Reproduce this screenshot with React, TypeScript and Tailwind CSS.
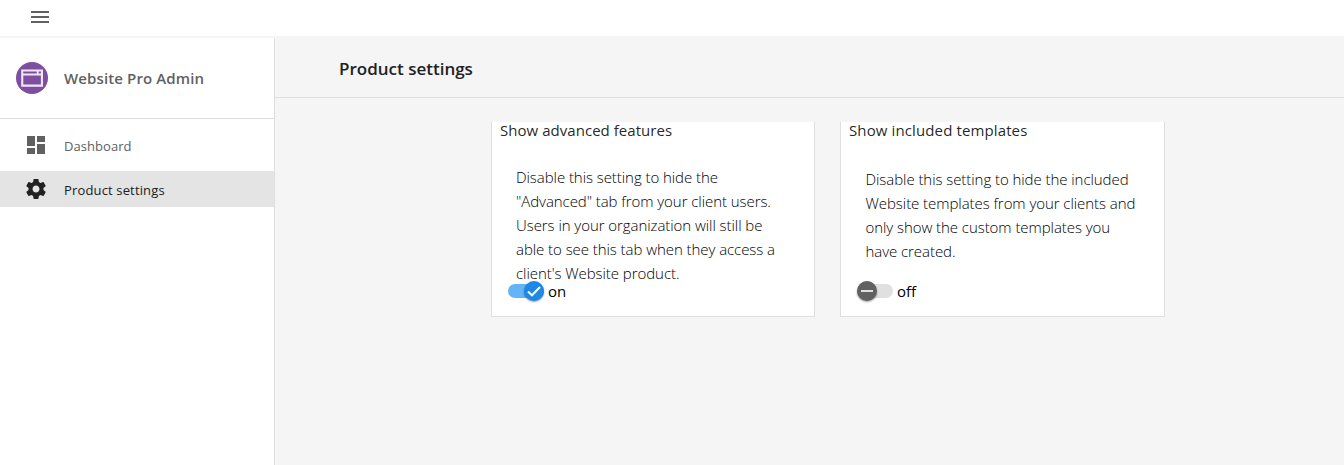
import { ReactNode } from 'react';

function Line({ className = '', children }: { className?: string; children: ReactNode }) {
  return <span className={`block whitespace-nowrap ${className}`}>{children}</span>;
}

function MenuIcon() {
  return (
    <svg className="size-6" viewBox="0 0 24 24" fill="#616161">
      <path d="M3 18h18v-2H3v2zm0-5h18v-2H3v2zm0-7v2h18V6H3z" />
    </svg>
  );
}

function WindowLogo() {
  return (
    <svg className="size-8 shrink-0" viewBox="0 0 32 32">
      <circle cx="16" cy="16" r="16" fill="#7e4fa0" />
      <path fill="#efe6f5" fillRule="evenodd" d="M5.2 7.5h21.8v17.2H5.2zM7.2 9.6v1.8h13.6V9.6zM22.6 9.6v1.8h2.3V9.6zM7.3 13.6v9h17.6v-9z" />
    </svg>
  );
}

function DashboardIcon() {
  return (
    <svg className="size-6 shrink-0" viewBox="0 0 24 24" fill="#616161">
      <path d="M3 13h8V3H3v10zm0 8h8v-6H3v6zm10 0h8V11h-8v10zm0-18v6h8V3h-8z" />
    </svg>
  );
}

function SettingsIcon() {
  return (
    <svg className="size-6 shrink-0" viewBox="0 0 24 24" fill="#212121">
      <path d="M19.43 12.98c.04-.32.07-.64.07-.98s-.03-.66-.07-.98l2.11-1.65c.19-.15.24-.42.12-.64l-2-3.46c-.12-.22-.39-.3-.61-.22l-2.49 1c-.52-.4-1.08-.73-1.69-.98l-.38-2.65C14.46 2.18 14.25 2 14 2h-4c-.25 0-.46.18-.49.42l-.38 2.65c-.61.25-1.17.59-1.69.98l-2.49-1c-.23-.09-.49 0-.61.22l-2 3.46c-.13.22-.07.49.12.64l2.11 1.65c-.04.32-.07.65-.07.98s.03.66.07.98l-2.11 1.65c-.19.15-.24.42-.12.64l2 3.46c.12.22.39.3.61.22l2.49-1c.52.4 1.08.73 1.69.98l.38 2.65c.03.24.24.42.49.42h4c.25 0 .46-.18.49-.42l.38-2.65c.61-.25 1.17-.59 1.69-.98l2.49 1c.23.09.49 0 .61-.22l2-3.46c.12-.22.07-.49-.12-.64l-2.11-1.65zM12 15.5c-1.93 0-3.5-1.57-3.5-3.5s1.57-3.5 3.5-3.5 3.5 1.57 3.5 3.5-1.57 3.5-3.5 3.5z" />
    </svg>
  );
}

function Toggle({ on }: { on: boolean }) {
  return (
    <span className={`flex h-[14px] w-9 items-center rounded-full ${on ? 'justify-end bg-[#64b5f6]' : 'justify-start bg-[#e0e0e0]'}`}>
      <span className={`flex size-5 shrink-0 items-center justify-center rounded-full shadow-[0_1px_2px_rgba(0,0,0,0.4)] ${on ? 'bg-[#1e88e5]' : 'bg-[#616161]'}`}>
        <svg className="size-4" viewBox="0 0 16 16" fill="none" stroke={on ? '#ffffff' : '#e0e0e0'} strokeWidth="2">
          {on ? <path d="M2 8.5 6 12.3 14 4" /> : <path d="M2 8h12" />}
        </svg>
      </span>
    </span>
  );
}

function Card({ title, on, className, children }: { title: ReactNode; on: boolean; className: string; children: ReactNode }) {
  return (
    <section className={`flex h-[195px] flex-col border-x border-b border-[#dedede] bg-white text-[#212121] ${className}`}>
      <h2 className="h-[43px] pl-2 text-[15px] leading-[16px] tracking-[0.04px] text-black/87">{title}</h2>
      <div className="h-[116px] pl-6 text-[15px] font-light leading-6 tracking-[-0.06px] text-black">{children}</div>
      <div className="flex h-5 items-center gap-1 pl-4 text-[15px] leading-5 text-black">
        <Toggle on={on} />
        <span>{on ? 'on' : 'off'}</span>
      </div>
    </section>
  );
}

export default function App() {
  return (
    <div className="flex h-[465px] w-[1344px] flex-col overflow-hidden bg-[#f5f5f5] font-['Open_Sans','Noto_Sans',sans-serif]">
      <header className="mb-0.5 flex h-9 shrink-0 items-start bg-white pl-7 pt-[5px]">
        <MenuIcon />
      </header>
      <div className="flex flex-1">
        <aside className="w-[275px] border-r border-[#dedede] bg-white">
          <div className="flex h-[81px] items-center gap-4 border-b border-[#dedede] pl-4 text-[15px] font-semibold tracking-[0.12px] text-[#616161]">
            <WindowLogo />
            <span>Website Pro Admin</span>
          </div>
          <nav className="flex flex-col gap-2 pt-2 text-[13px]">
            <a className="flex h-9 items-center gap-4 pl-6 text-[#616161]">
              <DashboardIcon />
              <span className="pt-[3px] tracking-[0.05px]">Dashboard</span>
            </a>
            <a className="flex h-9 items-center gap-4 bg-[#e4e4e4] pl-6 text-[#212121]">
              <SettingsIcon />
              <span className="pt-[3px] tracking-[0.15px]">Product settings</span>
            </a>
          </nav>
        </aside>
        <main className="flex-1">
          <div className="-mt-0.5 flex h-[62px] items-center border-b border-[#dedede] pl-16 pt-1 text-[17px] font-semibold text-[#212121]">
            <h1>Product settings</h1>
          </div>
          <div className="flex gap-[25px] pl-[216px] pt-6">
            <Card title="Show advanced features" on className="w-[324px]">
              <Line>Disable this setting to hide the</Line>
              <Line>"Advanced" tab from your client users.</Line>
              <Line>Users in your organization will still be</Line>
              <Line>able to see this tab when they access a</Line>
              <Line>client's Website product.</Line>
            </Card>
            <Card title={<span className="tracking-[0.12px]">Show included templates</span>} on={false} className="w-[325px]">
              <div className="pl-[0.5px] pt-0.5">
                <Line>Disable this setting to hide the included</Line>
                <Line>Website templates from your clients and</Line>
                <Line>only show the custom templates you</Line>
                <Line>have created.</Line>
              </div>
            </Card>
          </div>
        </main>
      </div>
    </div>
  );
}
